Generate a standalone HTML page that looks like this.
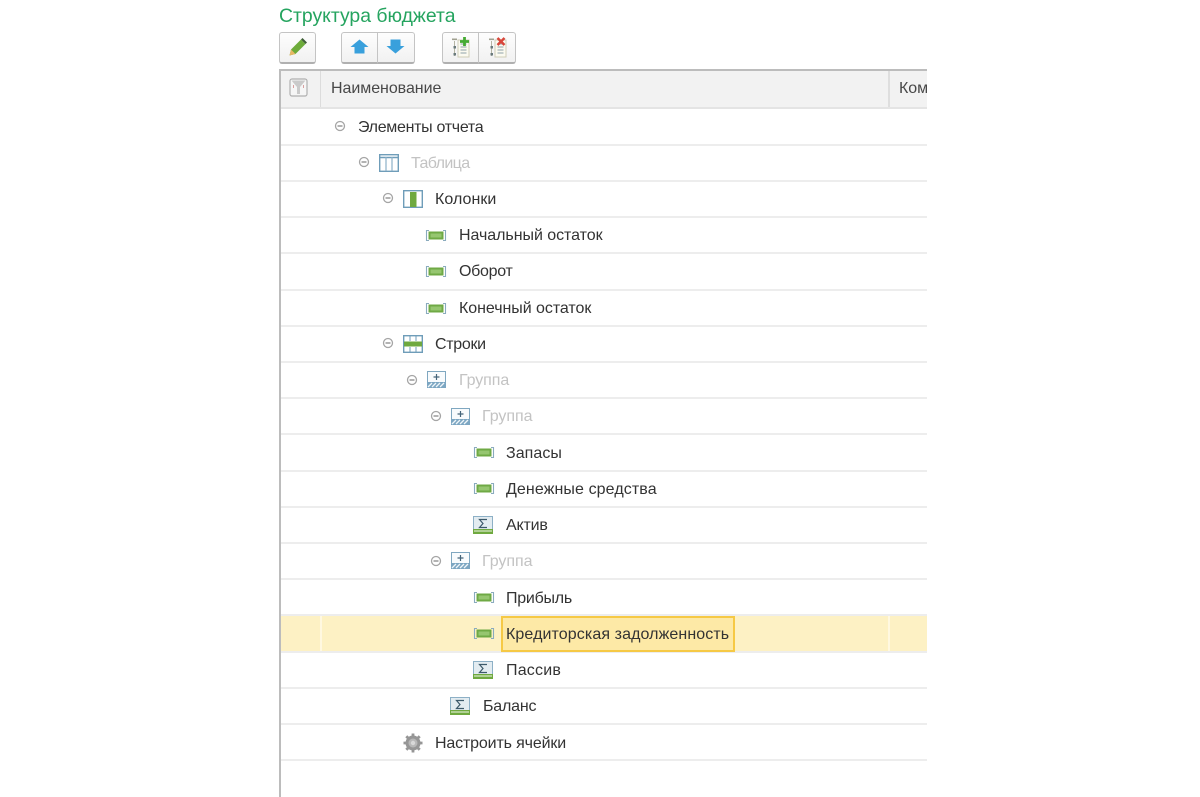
<!DOCTYPE html>
<html lang="ru">
<head>
<meta charset="utf-8">
<style>
html,body{margin:0;padding:0;background:#fff}
#p{position:relative;width:1200px;height:797px;overflow:hidden;background:#fff;font-family:"Liberation Sans",Arial,sans-serif;filter:blur(.35px)}
.a{position:absolute}
.t{position:absolute;font-size:16px;line-height:20px;margin-top:1px;color:#333;white-space:nowrap;letter-spacing:-.05px}
.g{color:#c3c3c3}
.sep{position:absolute;left:281px;width:646px;height:2px;background:#ededed}
.btn{position:absolute;top:32px;height:32px;background:linear-gradient(#fdfdfd,#f1f1f1);border:1px solid #c4c4c4;border-bottom:2px solid #b0b0b0;border-radius:3px;box-sizing:border-box}
svg{position:absolute;overflow:visible}
</style>
</head>
<body>
<div id="p">
<svg width="0" height="0" style="left:0;top:0">
<defs>
<g id="minus"><circle cx="6" cy="6" r="4.500" fill="#fff" stroke="#a5a5a5" stroke-width="1.300"/><path d="M3.500 6h5" stroke="#808080" stroke-width="1.200"/></g>
<g id="item"><path d="M3 .5H.5v10H3M17 .5h2.500v10H17" fill="none" stroke="#8aabbe" stroke-width="1.100"/><rect x="2.500" y="1.500" width="15" height="8" fill="#6fa945"/><rect x="4.500" y="3.500" width="11" height="4" fill="#96c670"/></g>
<g id="sum"><rect x=".5" y=".5" width="19" height="14" fill="#e3ecf1" stroke="#8db0c6"/><rect x="0" y="13" width="20" height="5" fill="#6fa93f"/><rect x="1" y="14.500" width="18" height="1" fill="#f2f7ea"/><path d="M14 3.500H6.500L10 7.500 6.500 11.500H14" fill="none" stroke="#3d5a6b" stroke-width="1.200"/></g>
<g id="grp"><rect x=".5" y=".5" width="18" height="16" fill="#f8fbfd" stroke="#7fa7c0"/><path d="M9.500 3v6M6.500 6h6" stroke="#44647a" stroke-width="1.200"/><rect x="0" y="11" width="19" height="6" fill="#7ca6c2"/><path d="M1 16l4-4M5 16l4-4M9 16l4-4M13 16l4-4" stroke="#eef5f9" stroke-width="1.300"/></g>
<g id="doc"><path d="M8 5H19v17H8z" fill="#fbfaf0" stroke="#cfcdb8"/><path d="M10.500 9h6M10.500 12h6M10.500 15h6M10.500 18h6" stroke="#a5b5b8" stroke-width="1.200"/><path d="M4.500 6v15" stroke="#b5b5a5"/><rect x="2" y="3.500" width="5" height="1.600" fill="#a0a090"/><rect x="3.500" y="11" width="2.500" height="2.500" fill="#6a7a7c"/><rect x="3.500" y="18" width="2.500" height="2.500" fill="#6a7a7c"/></g>
</defs>
</svg>

<div class="a" style="left:279px;top:3px;font-size:19.400px;line-height:26px;color:#25a45f;white-space:nowrap">Структура бюджета</div>

<!-- toolbar -->
<div class="btn" style="left:279px;width:37px"></div>
<svg style="left:288px;top:37px" width="20" height="20" viewBox="0 0 20 20"><path d="M1.500 18.500l1.500-6L13 2.500l4.500 4.500-10 10z" fill="#6dab3a"/><path d="M3 12.500l4.500 4.500-6 1.500z" fill="#e8b765"/><path d="M13 2.500l1.500-1.500 4.500 4.500L17.500 7z" fill="#3f5f38"/></svg>

<div class="btn" style="left:341px;width:37px;border-radius:3px 0 0 3px"></div>
<div class="btn" style="left:377px;width:38px;border-radius:0 3px 3px 0"></div>
<svg style="left:350px;top:39px" width="19" height="15" viewBox="0 0 19 15"><path d="M9.500 .5L18.500 8H14.500V14.500H4.500V8H.5z" fill="#39a0dc"/></svg>
<svg style="left:386px;top:39px" width="19" height="15" viewBox="0 0 19 15"><path d="M4.500 .5H14.500V7H18.500L9.500 14.500 .5 7H4.500z" fill="#39a0dc"/></svg>

<div class="btn" style="left:442px;width:37px;border-radius:3px 0 0 3px"></div>
<div class="btn" style="left:478px;width:38px;border-radius:0 3px 3px 0"></div>
<svg style="left:450px;top:35px" width="22" height="24" viewBox="0 0 22 24"><use href="#doc"/><path d="M14.500 2v9M10 6.500h9" stroke="#45ab33" stroke-width="2.800"/></svg>
<svg style="left:487px;top:35px" width="22" height="24" viewBox="0 0 22 24"><use href="#doc"/><path d="M10.500 3l7 7M17.500 3l-7 7" stroke="#d8463a" stroke-width="2.500"/></svg>

<!-- table frame -->
<div class="a" style="left:279px;top:69px;width:648px;height:2px;background:#bcbcbc"></div>
<div class="a" style="left:279px;top:69px;width:2px;height:728px;background:#bcbcbc"></div>
<div class="a" style="left:281px;top:71px;width:646px;height:36px;background:#f2f2f2"></div>
<div class="a" style="left:281px;top:107px;width:646px;height:2px;background:#e4e4e4"></div>
<div class="a" style="left:320px;top:71px;width:1px;height:36px;background:#dcdcdc"></div>
<div class="a" style="left:888px;top:71px;width:2px;height:36px;background:#dedede"></div>
<svg style="left:289px;top:78px" width="19" height="19" viewBox="0 0 19 19"><rect x="1" y="1" width="17" height="17" rx="2" fill="#f6f6f6" stroke="#b0b0b0" stroke-width="1.200"/><path d="M2.500 2.500h14L11 9v7H8V9z" fill="#cacaca"/><path d="M4.500 7v3M14.500 7v3" stroke="#d9a0a0"/></svg>
<div class="t" style="left:331px;top:78px;color:#484848">Наименование</div>
<div class="a" style="left:899px;top:79px;width:28px;overflow:hidden"><div class="t" style="position:static;margin:0;color:#484848">Комментарий</div></div>

<!-- separators -->
<div class="sep" style="top:144px"></div>
<div class="sep" style="top:180px"></div>
<div class="sep" style="top:216px"></div>
<div class="sep" style="top:252px"></div>
<div class="sep" style="top:289px"></div>
<div class="sep" style="top:325px"></div>
<div class="sep" style="top:361px"></div>
<div class="sep" style="top:397px"></div>
<div class="sep" style="top:433px"></div>
<div class="sep" style="top:470px"></div>
<div class="sep" style="top:506px"></div>
<div class="sep" style="top:542px"></div>
<div class="sep" style="top:578px"></div>
<div class="sep" style="top:614px"></div>
<div class="sep" style="top:651px"></div>
<div class="sep" style="top:687px"></div>
<div class="sep" style="top:723px"></div>
<div class="sep" style="top:759px"></div>

<!-- selected row -->
<div class="a" style="left:281px;top:616px;width:646px;height:35px;background:#fdf1c4"></div>
<div class="a" style="left:320px;top:616px;width:2px;height:35px;background:#fff8e0"></div>
<div class="a" style="left:888px;top:616px;width:2px;height:35px;background:#fff8e0"></div>
<div class="a" style="left:501px;top:616px;width:234px;height:36px;box-sizing:border-box;background:#fde9a6;border:2px solid #f6c945"></div>

<!-- rows -->
<svg style="left:334px;top:120px" width="12" height="12"><use href="#minus"/></svg>
<div class="t" style="left:358px;top:117px;letter-spacing:-.3px">Элементы отчета</div>

<svg style="left:358px;top:156px" width="12" height="12"><use href="#minus"/></svg>
<svg style="left:379px;top:154px" width="20" height="18" viewBox="0 0 20 18"><rect x=".7" y=".7" width="18.600" height="16.600" fill="#fff" stroke="#6f9db9" stroke-width="1.400"/><path d="M.7 3.500H19.300" stroke="#6f9db9" stroke-width="1.400"/><path d="M7 3v14M13 3v14" stroke="#8db1c8" stroke-width="1.200"/></svg>
<div class="t g" style="left:411px;top:153px;letter-spacing:-.6px">Таблица</div>

<svg style="left:382px;top:192px" width="12" height="12"><use href="#minus"/></svg>
<svg style="left:403px;top:190px" width="20" height="18" viewBox="0 0 20 18"><rect x=".7" y=".7" width="18.600" height="16.600" fill="#fff" stroke="#6f9db9" stroke-width="1.400"/><rect x="7" y="2" width="6.500" height="15" fill="#6fa93f"/></svg>
<div class="t" style="left:435px;top:189px;letter-spacing:.05px">Колонки</div>

<svg style="left:426px;top:230px" width="20" height="11"><use href="#item"/></svg>
<div class="t" style="left:459px;top:225px">Начальный остаток</div>
<svg style="left:426px;top:266px" width="20" height="11"><use href="#item"/></svg>
<div class="t" style="left:459px;top:261px;letter-spacing:-.3px">Оборот</div>
<svg style="left:426px;top:303px" width="20" height="11"><use href="#item"/></svg>
<div class="t" style="left:459px;top:298px">Конечный остаток</div>

<svg style="left:382px;top:337px" width="12" height="12"><use href="#minus"/></svg>
<svg style="left:403px;top:335px" width="20" height="18" viewBox="0 0 20 18"><rect x=".7" y=".7" width="18.600" height="16.600" fill="#fff" stroke="#6f9db9" stroke-width="1.400"/><rect x="1" y="6.500" width="18" height="5" fill="#6fa93f"/><path d="M7 1v5M13 1v5M7 12v5M13 12v5" stroke="#6f9db9"/></svg>
<div class="t" style="left:435px;top:334px;letter-spacing:-.3px">Строки</div>

<svg style="left:406px;top:374px" width="12" height="12"><use href="#minus"/></svg>
<svg style="left:427px;top:371px" width="19" height="17"><use href="#grp"/></svg>
<div class="t g" style="left:459px;top:370px;letter-spacing:-.1px">Группа</div>

<svg style="left:430px;top:410px" width="12" height="12"><use href="#minus"/></svg>
<svg style="left:451px;top:408px" width="19" height="17"><use href="#grp"/></svg>
<div class="t g" style="left:482px;top:406px">Группа</div>

<svg style="left:474px;top:447px" width="20" height="11"><use href="#item"/></svg>
<div class="t" style="left:506px;top:443px;letter-spacing:.05px">Запасы</div>
<svg style="left:474px;top:483px" width="20" height="11"><use href="#item"/></svg>
<div class="t" style="left:506px;top:479px;letter-spacing:.1px">Денежные средства</div>
<svg style="left:473px;top:516px" width="20" height="18"><use href="#sum"/></svg>
<div class="t" style="left:506px;top:515px;letter-spacing:-.2px">Актив</div>

<svg style="left:430px;top:555px" width="12" height="12"><use href="#minus"/></svg>
<svg style="left:451px;top:552px" width="19" height="17"><use href="#grp"/></svg>
<div class="t g" style="left:482px;top:551px">Группа</div>

<svg style="left:474px;top:592px" width="20" height="11"><use href="#item"/></svg>
<div class="t" style="left:506px;top:588px;letter-spacing:-.25px">Прибыль</div>
<svg style="left:474px;top:628px" width="20" height="11"><use href="#item"/></svg>
<div class="t" style="left:506px;top:624px;letter-spacing:.1px">Кредиторская задолженность</div>
<svg style="left:473px;top:661px" width="20" height="18"><use href="#sum"/></svg>
<div class="t" style="left:506px;top:660px;letter-spacing:.2px">Пассив</div>
<svg style="left:450px;top:697px" width="20" height="18"><use href="#sum"/></svg>
<div class="t" style="left:483px;top:696px;letter-spacing:-.2px">Баланс</div>

<svg style="left:403px;top:733px" width="20" height="20" viewBox="0 0 20 20"><circle cx="10" cy="10" r="7.500" fill="#969696"/><path d="M10 .5v19M.5 10h19M3.300 3.300l13.400 13.400M16.700 3.300L3.300 16.700" stroke="#969696" stroke-width="2.800"/><circle cx="10" cy="10" r="4.500" fill="#b8b8b8"/><circle cx="10" cy="10" r="2.200" fill="#d8d8d8"/></svg>
<div class="t" style="left:435px;top:733px;letter-spacing:-.15px">Настроить ячейки</div>
</div>
</body>
</html>
